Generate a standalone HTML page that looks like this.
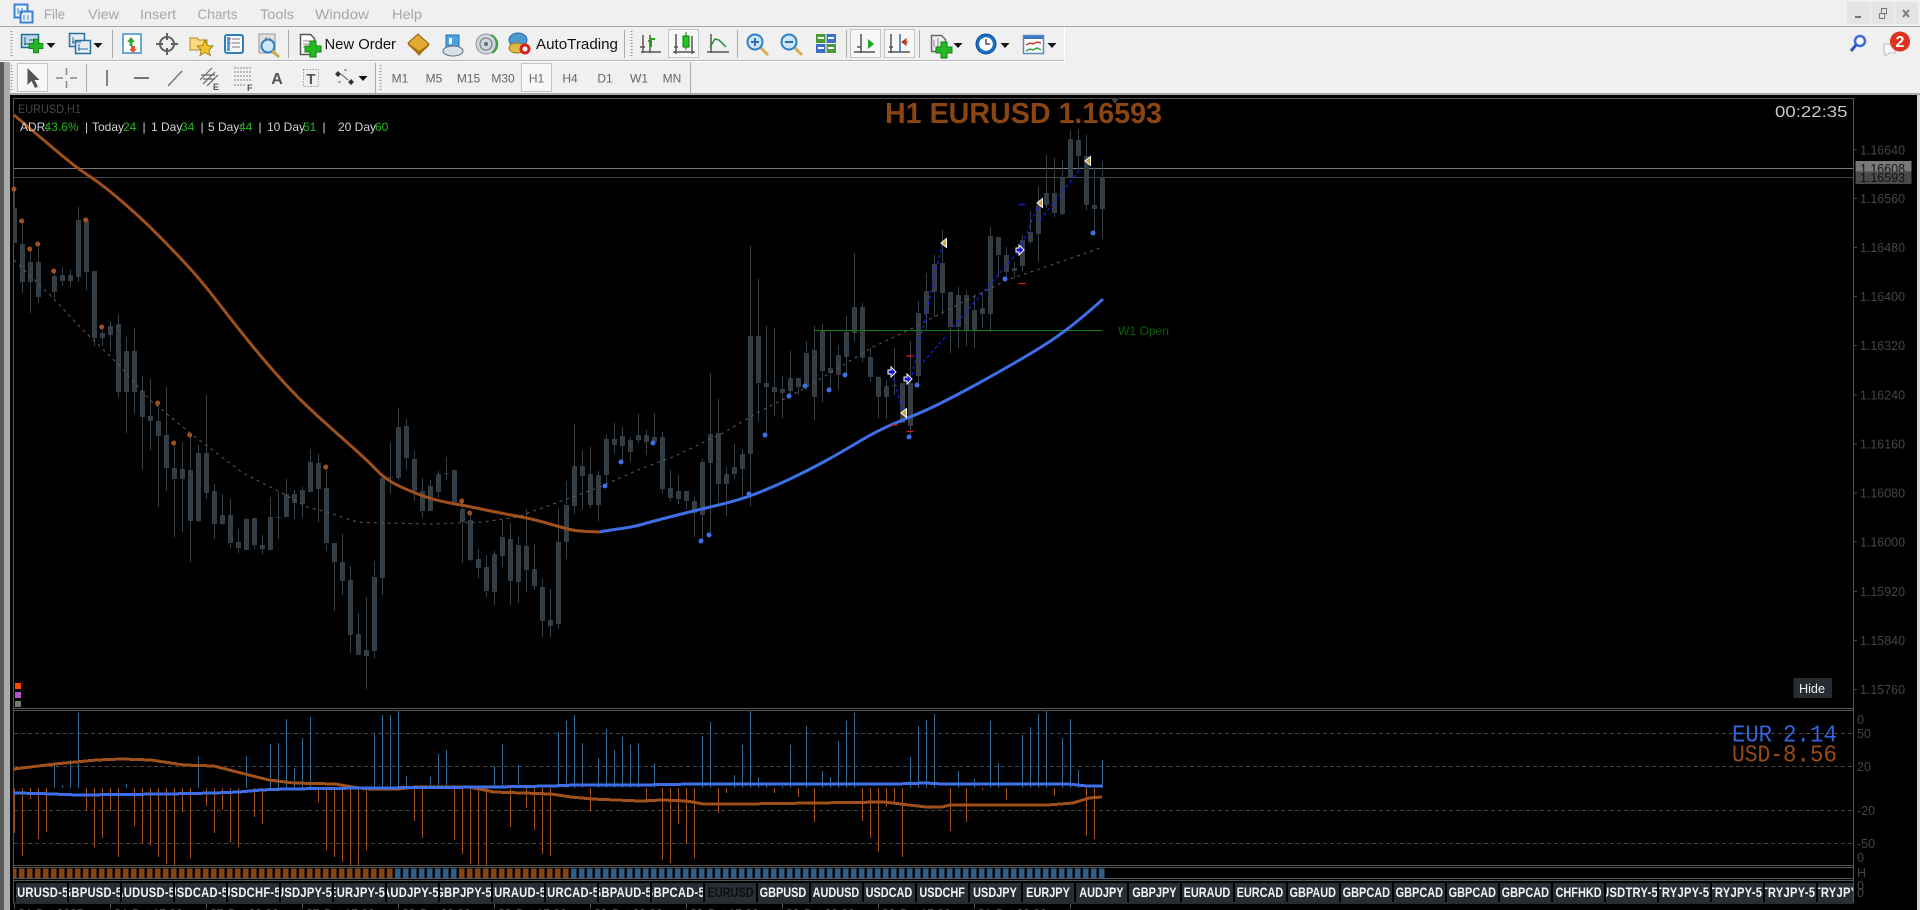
<!DOCTYPE html>
<html lang="en"><head><meta charset="utf-8"><title>EURUSD,H1</title>
<style>
html,body{margin:0;padding:0;width:1920px;height:910px;overflow:hidden;background:#f0f0f0;font-family:"Liberation Sans",sans-serif}
svg.main{position:absolute;left:0;top:0}
.b{position:absolute;top:883px;width:51.5px;height:19px;background:#282e33;overflow:hidden;display:flex;justify-content:center;color:#f4f4f4;font:bold 14px/19px "Liberation Sans",sans-serif;white-space:nowrap}
.b span{display:block;flex:none;transform:scaleX(.78)}
.b.l span{transform:translateX(-2px) scaleX(.8);letter-spacing:.3px}
.b.d{color:#0c0e10}
.clip{position:absolute;left:0;top:0;width:1853px;height:910px;overflow:hidden}
</style></head><body>
<svg class="main" width="1920" height="910" viewBox="0 0 1920 910" xmlns="http://www.w3.org/2000/svg" font-family="'Liberation Sans',sans-serif">
<defs>
<g id="plus"><path d="M-3-8h6v5h5v6h-5v5h-6v-5h-5v-6h5z" fill="#24b824" stroke="#0f7f0f"/></g>
<g id="drop"><path d="M-4.500 0h9l-4.500 5z" fill="#111"/></g>
<g id="axis" fill="none" stroke="#555" stroke-width="1.500"><path d="M-8-9V9M-1-9V9M-10 8H10M-11 3h5M-3-3h4"/></g>
<pattern id="po" patternUnits="userSpaceOnUse" x="11" y="0" width="8" height="10"><rect width="5.500" height="10" fill="#8b4513"/></pattern>
<pattern id="pb" patternUnits="userSpaceOnUse" x="11" y="0" width="8" height="10"><rect width="5.500" height="10" fill="#2c5f8c"/></pattern>
</defs>

<!-- chrome -->
<rect width="1920" height="910" fill="#f0f0f0"/>
<rect x="0" y="26" width="1920" height="1" fill="#a4a4a4"/>
<rect x="0" y="60" width="1064" height="1" fill="#b4b4b4"/><rect x="0" y="61" width="1065" height="1" fill="#fff"/>
<rect x="1064" y="27" width="1" height="34" fill="#fff"/>
<rect x="0" y="93" width="1920" height="2" fill="#a8a8a8"/>

<!-- app icon -->
<g><rect x="14.500" y="4.500" width="13" height="13" fill="#e8f2fc" stroke="#3b82d6" stroke-width="2"/><rect x="20.500" y="11.500" width="12" height="11" fill="#e8f2fc" stroke="#3b82d6" stroke-width="2"/><path d="M18 8v6M22 8v6M24 15v5M28 15v5" stroke="#3b82d6"/></g>
<!-- menu -->
<g font-size="14" fill="#a6a6a6">
<text x="44" y="19" textLength="21" lengthAdjust="spacingAndGlyphs">File</text>
<text x="88" y="19" textLength="31" lengthAdjust="spacingAndGlyphs">View</text>
<text x="140" y="19" textLength="36" lengthAdjust="spacingAndGlyphs">Insert</text>
<text x="197.500" y="19" textLength="40" lengthAdjust="spacingAndGlyphs">Charts</text>
<text x="260" y="19" textLength="34" lengthAdjust="spacingAndGlyphs">Tools</text>
<text x="315" y="19" textLength="54" lengthAdjust="spacingAndGlyphs">Window</text>
<text x="392" y="19" textLength="30" lengthAdjust="spacingAndGlyphs">Help</text>
</g>
<!-- window buttons -->
<rect x="1847" y="2" width="23" height="22" fill="#e4e4e4"/><rect x="1871" y="2" width="23" height="22" fill="#e4e4e4"/><rect x="1895" y="2" width="23" height="22" fill="#e4e4e4"/>
<path d="M1855 17h6" stroke="#777" stroke-width="2"/>
<path d="M1880.500 13.500h6v-5h-5v5M1879.500 13.500h5v5h-5z" fill="none" stroke="#777"/>
<path d="M1903 10l6 7M1909 10l-6 7" stroke="#777" stroke-width="1.800"/>
<!-- grips + seps -->
<path d="M11.500 31v26M631.500 31v26M11.500 65v26M380.500 65v26" stroke="#999" stroke-width="2" stroke-dasharray="1 2"/>
<path d="M112.500 30v28M288.500 30v28M624.500 30v28M737.500 30v28M846.500 30v28M919.500 30v28M86.500 64v28M375.500 63v30M690.500 62v31" stroke="#aaa"/>
<!-- selected boxes -->
<g fill="#f7f7f7" stroke="#c4c4c4"><rect x="668.500" y="29.500" width="30" height="28"/><rect x="850.500" y="29.500" width="30" height="28"/><rect x="884.500" y="29.500" width="30" height="28"/><rect x="17.500" y="63.500" width="30" height="28"/><rect x="521.500" y="63.500" width="30" height="28"/></g>

<!-- toolbar1 icons -->
<g><rect x="21.500" y="34.500" width="17" height="13" fill="#bcd8e8" stroke="#1e6e8e" stroke-width="1.500"/><path d="M25 37v8M24 44h12M29 40h6" stroke="#1e5e7e"/><use href="#plus" transform="translate(36 46) scale(.85)"/></g>
<use href="#drop" x="51" y="43"/>
<g fill="#e4ecf4" stroke="#2a6f9e" stroke-width="1.500"><rect x="69.500" y="33.500" width="15" height="13"/><rect x="75.500" y="40.500" width="15" height="13"/></g><path d="M73 37v7M72 42h9M79 44v7M78 49h10" stroke="#2a6f9e"/>
<use href="#drop" x="98" y="43"/>
<g><rect x="123" y="34" width="18" height="19" fill="#fff" stroke="#6aa8dc" stroke-width="2"/><path d="M127 42l4-5 4 5h-2.500v4h-3v-4z" fill="#2eaa2e"/><path d="M131 46h4v3h2l-4 4-4-4h2z" fill="#e0552a"/></g>
<g fill="none" stroke="#606060"><circle cx="167" cy="44" r="7" stroke-width="2"/><path d="M167 33v7M167 48v7M156 44h7M171 44h7" stroke-width="2"/></g>
<g><path d="M190 38h7l2 2h8v10h-17z" fill="#f8dc80" stroke="#b08a20"/><path d="M205 40l2.500 5.500 5.500.5-4 4 1.300 5.500-5.300-3-5 3 1.200-5.500-4-4 5.500-.5z" fill="#f2c428" stroke="#a88418"/></g>
<g><rect x="225" y="35" width="18" height="18" rx="2" fill="#f8f8f8" stroke="#2a7fc0" stroke-width="2"/><path d="M227 37h3v14h-3z" fill="#4aa0e0"/><path d="M232 39h8M232 43h8M232 47h8" stroke="#777"/><path d="M229 39h2M229 43h2" stroke="#d03030"/></g>
<g><rect x="259" y="34" width="16" height="19" fill="#e0e0e0" stroke="#999"/><circle cx="268" cy="46" r="6.500" fill="#cfe6f8" stroke="#2a80c8" stroke-width="2"/><path d="M272 51l7 6" stroke="#c8a848" stroke-width="3"/><path d="M266 41v-4M270 41v-3" stroke="#666"/></g>
<g><path d="M300.500 34.500h10l4 4v16h-14z" fill="#fff" stroke="#555" stroke-width="1.500"/><path d="M303 41h8M303 44h8M303 47h5" stroke="#888"/><use href="#plus" transform="translate(313 49)"/></g>
<text x="324.500" y="49" font-size="15" fill="#111" textLength="71.500" lengthAdjust="spacingAndGlyphs">New Order</text>
<g><path d="M408 43l10-9 11 10-10 11z" fill="#e0aa30" stroke="#8a5a10"/><path d="M408 43l11 8 10-7v2l-10 9-11-10z" fill="#a87014"/></g>
<g><rect x="446" y="35" width="13" height="13" fill="#4aa0e0" stroke="#1e6eb0"/><path d="M449 38h3v6h-3z" fill="#fff"/><ellipse cx="453" cy="51" rx="10" ry="5" fill="#d8e0e8" stroke="#5a6a7a"/></g>
<g fill="none"><circle cx="486" cy="44" r="10" fill="#cfd6da" stroke="#8a9498"/><circle cx="486" cy="44" r="6" stroke="#6a7478"/><circle cx="486" cy="44" r="2" fill="#507880"/><path d="M491 35a10 10 0 0 1 1 18" stroke="#3aa040" stroke-width="2"/></g>
<g><ellipse cx="518" cy="40" rx="9" ry="7" fill="#4a9ad0" stroke="#2a6a98"/><ellipse cx="517" cy="48" rx="8" ry="5" fill="#e2b648" stroke="#a07c20"/><circle cx="525" cy="49" r="5.500" fill="#d82020"/><circle cx="525" cy="49" r="2.500" fill="#fff"/></g>
<text x="536" y="49" font-size="15" fill="#111" textLength="82" lengthAdjust="spacingAndGlyphs">AutoTrading</text>

<!-- chart type icons -->
<use href="#axis" x="651" y="44"/><path d="M651 47v-8h4" fill="none" stroke="#1aa01a" stroke-width="2"/>
<g transform="translate(684 44)"><path d="M-8-10V10M-11 8H11M-10 3h4M8-8V10" fill="none" stroke="#555" stroke-width="1.500"/><path d="M2-12V6" stroke="#0a7a0a"/><rect x="-1" y="-8" width="6" height="11" fill="#1ec81e" stroke="#0a7a0a"/></g>
<g transform="translate(718 44)"><path d="M-7-10V9M-11 8H11" fill="none" stroke="#555" stroke-width="1.500"/><path d="M-8 3l5-8 4 1 7 7" fill="none" stroke="#2a8a3a" stroke-width="1.500"/></g>
<g fill="#cfe6f8" stroke="#2a7fc8" stroke-width="2"><circle cx="755" cy="42" r="7.500"/><circle cx="789" cy="42" r="7.500"/></g>
<path d="M751 42h8M755 38v8M785 42h8" stroke="#2a70b8" stroke-width="2"/>
<path d="M761 48l7 7M795 48l7 7" stroke="#d6b050" stroke-width="3"/>
<g><rect x="816" y="34" width="20" height="19" fill="#fff"/><rect x="816" y="34" width="9.500" height="9" fill="#4a9a3a"/><rect x="826.500" y="34" width="9.500" height="9" fill="#3a70c8"/><rect x="816" y="44" width="9.500" height="9" fill="#3a70c8"/><rect x="826.500" y="44" width="9.500" height="9" fill="#4a9a3a"/><path d="M818 38h6M828 38h6M818 48h6M828 48h6" stroke="#fff" stroke-width="2"/></g>
<g transform="translate(865 44)"><path d="M-4-10V9M-11 8H10M-8 3h4" fill="none" stroke="#555" stroke-width="1.500"/><path d="M3-5l6 5-6 5z" fill="#1ea81e"/></g>
<g transform="translate(899 44)"><path d="M-8-10V9M-11 8H11M-10 3h4" fill="none" stroke="#555" stroke-width="1.500"/><path d="M1-10V9" stroke="#2a70b8" stroke-width="1.500"/><path d="M9-2l-5 0M7-5l-4 3 4 3z" fill="#d84a20" stroke="#c02a10"/></g>
<!-- templates/periods/indicators -->
<g><path d="M931.500 35.500h10l4 4v12h-14z" fill="#eee" stroke="#666" stroke-width="1.500"/><path d="M934 40v7M938 38v9" stroke="#888"/><use href="#plus" transform="translate(944 50)"/></g><use href="#drop" x="958" y="43"/>
<g><circle cx="986" cy="44" r="10" fill="#1a6ec8" stroke="#104a90"/><circle cx="986" cy="44" r="6.800" fill="#fff"/><path d="M986 39v5h4" fill="none" stroke="#333" stroke-width="1.300"/></g><use href="#drop" x="1005" y="43"/>
<g><rect x="1023.500" y="35.500" width="20" height="18" fill="#fff" stroke="#5a8ac0" stroke-width="1.500"/><rect x="1024" y="36" width="19" height="3" fill="#3a78c8"/><path d="M1026 45l4-2 3 1 4-2 4 1" fill="none" stroke="#c03a20" stroke-width="1.500"/><path d="M1026 51l4-2 3 1 4-2 4 2" fill="none" stroke="#2a9a3a" stroke-width="1.500"/></g><use href="#drop" x="1052" y="43"/>

<!-- toolbar2 icons -->
<path d="M27.500 68v17l4-4 3.500 7 3-1.500-3.500-6.500h5z" fill="#555"/>
<path d="M66.500 68v7M66.500 81v7M56 78h7M70 78h7" stroke="#888" stroke-width="1.500"/>
<path d="M107 70v16" stroke="#777" stroke-width="1.800"/>
<path d="M134 78h15" stroke="#666" stroke-width="1.800"/>
<path d="M168 86l14-15" stroke="#777" stroke-width="1.500"/>
<path d="M200 80l12-12M203 84l12-12M207 86l11-11M201 75h14M203 79h12" stroke="#666" stroke-width="1.200"/>
<text x="213" y="90" font-size="9" font-weight="bold" fill="#555">E</text>
<path d="M234 68h17M234 72h17M234 76h17M234 80h17M234 85h12" stroke="#888" stroke-dasharray="2 1"/>
<text x="247" y="91" font-size="9" font-weight="bold" fill="#555">F</text>
<text x="277" y="84" font-size="16" font-weight="bold" fill="#555" text-anchor="middle">A</text>
<rect x="303.500" y="69.500" width="15" height="17" fill="none" stroke="#777" stroke-dasharray="1 2"/>
<text x="311" y="84" font-size="15" font-weight="bold" fill="#555" text-anchor="middle">T</text>
<path d="M338 71l3 3-3 3-3-3zM351 79l3 3-3 3-3-3z" fill="#333"/><path d="M341 74l7 6" stroke="#555"/><path d="M347 70h-3M338 82h3" stroke="#3a7a3a"/>
<use href="#drop" x="363" y="76"/>
<g font-size="12" fill="#666" text-anchor="middle">
<text x="400" y="82.500">M1</text><text x="434" y="82.500">M5</text><text x="468.500" y="82.500">M15</text><text x="503" y="82.500">M30</text>
<text x="536.500" y="82.500">H1</text><text x="570" y="82.500">H4</text><text x="605" y="82.500">D1</text><text x="639" y="82.500">W1</text><text x="672" y="82.500">MN</text>
</g>
<!-- search + chat -->
<circle cx="1860" cy="41" r="5" fill="#fff" stroke="#3a6ad8" stroke-width="2.500"/><path d="M1856 45l-5 6" stroke="#2a5ac0" stroke-width="3"/>
<path d="M1884 44h11v9h-6l-4 3v-3h-1z" fill="#f8f8f8" stroke="#bbb"/>
<circle cx="1900" cy="41.500" r="10" fill="#e0301e"/>
<text x="1900" y="47" font-size="16" font-weight="bold" fill="#fff" text-anchor="middle">2</text>

<!-- left edge -->
<rect x="0" y="62" width="4" height="848" fill="#5a5a5a"/><rect x="4" y="62" width="6" height="848" fill="#ababab"/>
<!-- chart bg -->
<rect x="10" y="95" width="1907" height="815" fill="#000"/>
<rect x="1917" y="95" width="3" height="815" fill="#d8d8d8"/>

<!-- frames -->
<g stroke="#555" fill="none">
<path d="M13.500 98.500H1853.500V903M13.500 98.500V903"/>
<path d="M13 708.500H1853M13 710.500H1853M13 865.500H1853M13 867.500H1853M13 878.500H1853M13 880.500H1853M13 903H1853" />
</g>
<!-- levels -->
<path d="M14 168.500H1853" stroke="#7c7c7c"/><path d="M14 177.500H1853" stroke="#444"/>
<path d="M1111 98l4 6 4-6z" fill="#444"/>
<path d="M1853 150h4M1853 198.500h4M1853 247.500h4M1853 296.500h4M1853 345.500h4M1853 395h4M1853 444h4M1853 493h4M1853 542h4M1853 591.500h4M1853 640.500h4M1853 689.500h4" stroke="#444"/>

<!-- wicks -->
<path stroke="#353e45" fill="none" d="M14.500 189V243M22.500 221V293M30.500 249V313M38.500 244V303M54.500 271V298M62.500 267V286M70.500 270V287M78.500 207V282M86.500 220V290M94.500 271V346M102.500 327V346M110.500 321V352M118.500 314V398M126.500 337V433M134.500 328V414M142.500 376V470M150.500 379V450M158.500 403V507M166.500 387V491M174.500 443V537M182.500 442V532M190.500 435V562M198.500 445V522M206.500 395V499M214.500 484V539M222.500 494V525M230.500 499V548M238.500 529V553M246.500 518V550M254.500 518V549M262.500 535V554M270.500 497V550M278.500 492V539M286.500 479V517M294.500 490V519M302.500 487V518M310.500 449V492M318.500 454V522M326.500 467V551M334.500 543V611M342.500 534V595M350.500 566V653M358.500 613V655M366.500 597V689M374.500 561V658M382.500 477V595M390.500 442V494M398.500 408V480M406.500 419V470M414.500 451V501M422.500 478V518M430.500 480V511M438.500 471V498M446.500 457V480M454.500 469V503M462.500 501V563M470.500 513V561M478.500 549V578M486.500 555V597M494.500 551V605M502.500 520V567M510.500 523V605M518.500 537V603M526.500 509V592M534.500 544V590M542.500 579V637M550.500 589V637M558.500 509V629M566.500 481V559M574.500 424V514M582.500 450V510M590.500 447V508M598.500 471V521M606.500 435V485M614.500 423V454M622.500 427V460M630.500 437V462M638.500 414V443M646.500 430V455M654.500 413V443M662.500 432V493M670.500 470V501M678.500 475V504M686.500 491V509M694.500 497V537M702.500 459V540M710.500 373V533M718.500 399V503M726.500 467V516M734.500 444V479M742.500 449V497M750.500 246V506M758.500 279V422M766.500 326V433M774.500 328V416M782.500 376V418M790.500 351V395M798.500 378V395M806.500 341V390M814.500 326V420M822.500 324V402M830.500 331V390M838.500 345V390M846.500 316V375M854.500 253V342M862.500 303V362M870.500 348V382M878.500 376V418M886.500 380V419M894.500 348V395M902.500 383V423M910.500 341V435M918.500 301V383M926.500 273V330M934.500 255V317M942.500 230V315M950.500 292V353M958.500 287V348M966.500 290V346M974.500 294V348M982.500 292V328M990.500 227V332M998.500 237V277M1006.500 247V279M1014.500 262V278M1022.500 235V271M1030.500 211V244M1038.500 186V262M1046.500 155V208M1054.500 158V217M1062.500 160V215M1070.500 130V177M1078.500 129V170M1086.500 135V210M1094.500 168V233M1102.500 161V239"/>
<!-- bodies -->
<path fill="#343d44" d="M13 208h4v35h-4zM20 244h5v38h-5zM28 262h5v20h-5zM36 262h5v35h-5zM52 276h5v16h-5zM60 275h5v6h-5zM68 275h5v6h-5zM76 220h5v57h-5zM84 220h5v52h-5zM92 271h5v67h-5zM100 333h5v5h-5zM108 326h5v9h-5zM116 324h5v68h-5zM124 351h5v41h-5zM132 351h5v41h-5zM140 391h5v26h-5zM148 416h5v5h-5zM156 421h5v15h-5zM164 435h5v33h-5zM172 468h5v11h-5zM180 469h5v10h-5zM188 470h5v51h-5zM196 453h5v68h-5zM204 453h5v40h-5zM212 491h5v33h-5zM220 515h5v9h-5zM228 515h5v28h-5zM236 542h5v6h-5zM244 519h5v31h-5zM252 518h5v27h-5zM260 545h5v4h-5zM268 517h5v33h-5zM276 517h5v1h-5zM284 494h5v23h-5zM292 494h5v9h-5zM300 490h5v14h-5zM308 462h5v30h-5zM316 463h5v26h-5zM324 488h5v55h-5zM332 543h5v19h-5zM340 562h5v19h-5zM348 580h5v55h-5zM356 634h5v21h-5zM364 650h5v6h-5zM372 577h5v74h-5zM380 478h5v100h-5zM388 477h5v1h-5zM396 427h5v51h-5zM404 426h5v32h-5zM412 459h5v32h-5zM420 491h5v20h-5zM428 486h5v25h-5zM436 474h5v18h-5zM444 473h5v1h-5zM452 470h5v32h-5zM460 509h5v13h-5zM468 520h5v40h-5zM476 559h5v9h-5zM484 567h5v24h-5zM492 554h5v38h-5zM500 537h5v19h-5zM508 539h5v42h-5zM516 545h5v37h-5zM524 546h5v24h-5zM532 569h5v17h-5zM540 587h5v34h-5zM548 620h5v6h-5zM556 542h5v82h-5zM564 505h5v37h-5zM572 466h5v40h-5zM580 466h5v10h-5zM588 474h5v31h-5zM596 475h5v30h-5zM604 439h5v36h-5zM612 439h5v6h-5zM620 436h5v10h-5zM628 440h5v12h-5zM636 435h5v5h-5zM644 435h5v7h-5zM652 437h5v5h-5zM660 437h5v52h-5zM668 488h5v10h-5zM676 491h5v8h-5zM684 491h5v10h-5zM692 501h5v12h-5zM700 462h5v53h-5zM708 434h5v29h-5zM716 433h5v51h-5zM724 474h5v10h-5zM732 467h5v7h-5zM740 454h5v15h-5zM748 336h5v118h-5zM756 336h5v47h-5zM764 383h5v4h-5zM772 387h5v5h-5zM780 389h5v4h-5zM788 378h5v13h-5zM796 378h5v9h-5zM804 353h5v33h-5zM812 350h5v47h-5zM820 331h5v40h-5zM828 368h5v5h-5zM836 355h5v20h-5zM844 332h5v25h-5zM852 307h5v26h-5zM860 307h5v51h-5zM868 357h5v20h-5zM876 377h5v20h-5zM884 386h5v11h-5zM892 385h5v1h-5zM900 383h5v40h-5zM908 383h5v43h-5zM916 313h5v63h-5zM924 291h5v23h-5zM932 264h5v28h-5zM940 263h5v30h-5zM948 292h5v35h-5zM956 295h5v32h-5zM964 295h5v35h-5zM972 310h5v20h-5zM980 308h5v6h-5zM988 236h5v78h-5zM996 237h5v18h-5zM1004 255h5v17h-5zM1012 268h5v3h-5zM1020 240h5v26h-5zM1028 232h5v10h-5zM1036 205h5v29h-5zM1044 193h5v12h-5zM1052 193h5v20h-5zM1060 178h5v36h-5zM1068 139h5v38h-5zM1076 140h5v16h-5zM1084 156h5v49h-5zM1092 205h5v4h-5zM1100 177h5v32h-5z"/>
<!-- dotted MA -->
<polyline fill="none" stroke="#5c5c5c" stroke-dasharray="3 4" points="14,260 53,298 80,327 117,363 150,400 190,433 243,473 280,492 307,507 330,513 357,522 380,523 433,524 483,522 517,517 567,499 600,487 640,469 673,457 723,433 757,413 807,387 840,367 873,347 913,328 957,305 1007,280 1057,263 1100,248"/>
<!-- W1 -->
<path d="M814 330.500H1102" stroke="#0a7d0a"/>
<text x="1118" y="335" font-size="12" fill="#066006" textLength="51" lengthAdjust="spacingAndGlyphs">W1 Open</text>
<!-- MA lines -->
<path fill="none" stroke="#a0501c" stroke-width="3" stroke-linejoin="round" d="M14 115L33.500 131.500Q53 148 65 158Q77 168 87 174.500Q97 181 107 189Q117 197 130 208.500Q143 220 156.500 233.500Q170 247 185 263Q200 279 216.500 300.500Q233 322 250 343Q267 364 283.500 382Q300 400 316.500 415Q333 430 350 445Q367 460 375 468.500Q383 477 391.500 482Q400 487 416.500 493.500Q433 500 450 503Q467 506 483.500 509.500Q500 513 516.500 516Q533 519 550 524Q567 529 572.500 530Q578 531 588.500 531.500L599 532"/>
<path fill="none" stroke="#3f6fe8" stroke-width="3" stroke-linejoin="round" d="M599 532L608 530.500Q617 529 625 528Q633 527 641.500 524.500Q650 522 671.500 516.500Q693 511 716.500 505.500Q740 500 756.500 493.500Q773 487 790 479Q807 471 823.500 462Q840 453 860 441Q880 429 901.500 420.500Q923 412 940 403.500Q957 395 973.500 386Q990 377 1013.500 363.500Q1037 350 1052 340Q1067 330 1083.500 316Q1100 302 1103 299"/>
<!-- dashes -->
<path d="M892 372L903 413M912 375L942 245M923 362L947 335M953 327L1020 250L1038 205M1040 220L1082 167" fill="none" stroke="#1a1af0" stroke-width="1.300" stroke-dasharray="3 3"/>
<path d="M906.500 356h7M890.500 425h7M906.500 431.500h7M1018.500 283.500h7" stroke="#d81e1e" stroke-width="1.300"/><path d="M1018.500 204.500h7" stroke="#1a1af0" stroke-width="1.300"/>
<!-- dots -->
<g fill="#a0501c"><circle cx="14" cy="189" r="2.500"/><circle cx="21.700" cy="221" r="2.500"/><circle cx="29.700" cy="249" r="2.500"/><circle cx="37.700" cy="244" r="2.500"/><circle cx="53.700" cy="271" r="2.500"/><circle cx="85.700" cy="220" r="2.500"/><circle cx="101.700" cy="327" r="2.500"/><circle cx="157.700" cy="403" r="2.500"/><circle cx="173.700" cy="443" r="2.500"/><circle cx="189.700" cy="435" r="2.500"/><circle cx="325.700" cy="467" r="2.500"/><circle cx="461.700" cy="501" r="2.500"/><circle cx="469.700" cy="513" r="2.500"/></g>
<g fill="#3f6fe8"><circle cx="605" cy="486" r="2.500"/><circle cx="621" cy="462" r="2.500"/><circle cx="653" cy="443" r="2.500"/><circle cx="701" cy="541" r="2.500"/><circle cx="709" cy="535" r="2.500"/><circle cx="749" cy="494" r="2.500"/><circle cx="765" cy="435" r="2.500"/><circle cx="789" cy="396" r="2.500"/><circle cx="805" cy="386" r="2.500"/><circle cx="829" cy="390" r="2.500"/><circle cx="845" cy="375" r="2.500"/><circle cx="909" cy="437" r="2.500"/><circle cx="917" cy="385" r="2.500"/><circle cx="1005" cy="279" r="2.500"/><circle cx="1093" cy="233" r="2.500"/></g>
<!-- signals -->
<g fill="#1414e0" stroke="#fff"><path transform="translate(892 372)" d="M-4-2h3v-3l5 5-5 5v-3h-3z"/><path transform="translate(908 379)" d="M-4-2h3v-3l5 5-5 5v-3h-3z"/><path transform="translate(1020 250)" d="M-4-2h3v-3l5 5-5 5v-3h-3z"/></g>
<g fill="#d89a28" stroke="#fff"><path transform="translate(904 413)" d="M-3 0L2.500-4.500V4.500z"/><path transform="translate(944 243)" d="M-3 0L2.500-4.500V4.500z"/><path transform="translate(1040 203)" d="M-3 0L2.500-4.500V4.500z"/><path transform="translate(1088 161)" d="M-3 0L2.500-4.500V4.500z"/></g>

<!-- chart text -->
<text x="18" y="113" font-size="12" fill="#474747" textLength="63" lengthAdjust="spacingAndGlyphs">EURUSD,H1</text>
<g font-size="12" fill="#d0d4d8">
<text x="20" y="131">ADR:</text><text x="85" y="131">|</text><text x="92" y="131">Today</text><text x="142.500" y="131">|</text><text x="151" y="131">1 Day</text><text x="200.500" y="131">|</text><text x="208" y="131">5 Day:</text><text x="258.500" y="131">|</text><text x="267" y="131">10 Day</text><text x="322.500" y="131">|</text><text x="338" y="131">20 Day</text>
</g>
<g font-size="12" fill="#1fb81f"><text x="44.500" y="131">43.6%</text><text x="123" y="131">24</text><text x="181" y="131">34</text><text x="239" y="131">44</text><text x="303" y="131">51</text><text x="375" y="131">60</text></g>
<text x="885" y="123" font-size="29" font-weight="bold" fill="#8b4513" textLength="277" lengthAdjust="spacingAndGlyphs">H1 EURUSD 1.16593</text>
<text x="1775" y="117" font-size="16" fill="#c8c8c8" textLength="72.500" lengthAdjust="spacingAndGlyphs">00:22:35</text>
<!-- axis labels -->
<g font-size="12.500" fill="#454545">
<text x="1860" y="154.500" textLength="45" lengthAdjust="spacingAndGlyphs">1.16640</text>
<text x="1860" y="203" textLength="45" lengthAdjust="spacingAndGlyphs">1.16560</text>
<text x="1860" y="252" textLength="45" lengthAdjust="spacingAndGlyphs">1.16480</text>
<text x="1860" y="301" textLength="45" lengthAdjust="spacingAndGlyphs">1.16400</text>
<text x="1860" y="350" textLength="45" lengthAdjust="spacingAndGlyphs">1.16320</text>
<text x="1860" y="399.500" textLength="45" lengthAdjust="spacingAndGlyphs">1.16240</text>
<text x="1860" y="448.500" textLength="45" lengthAdjust="spacingAndGlyphs">1.16160</text>
<text x="1860" y="497.500" textLength="45" lengthAdjust="spacingAndGlyphs">1.16080</text>
<text x="1860" y="546.500" textLength="45" lengthAdjust="spacingAndGlyphs">1.16000</text>
<text x="1860" y="596" textLength="45" lengthAdjust="spacingAndGlyphs">1.15920</text>
<text x="1860" y="645" textLength="45" lengthAdjust="spacingAndGlyphs">1.15840</text>
<text x="1860" y="694" textLength="45" lengthAdjust="spacingAndGlyphs">1.15760</text>
</g>
<rect x="1855.500" y="161" width="56" height="11" fill="#787878"/>
<text x="1860" y="173" font-size="12.500" fill="#161616" textLength="45" lengthAdjust="spacingAndGlyphs">1.16608</text>
<rect x="1855.500" y="171.500" width="56" height="12.500" fill="#4a4a4a"/>
<text x="1860" y="182" font-size="12.500" fill="#111" textLength="45" lengthAdjust="spacingAndGlyphs">1.16593</text>
<!-- Hide -->
<rect x="1793.500" y="678" width="38.500" height="20" fill="#262c31"/>
<text x="1799" y="693" font-size="13" fill="#f0f0f0" textLength="26" lengthAdjust="spacingAndGlyphs">Hide</text>
<!-- legend squares -->
<rect x="15" y="683" width="6" height="6" fill="#ff4500"/><rect x="15" y="692" width="6" height="6" fill="#b455c8"/><rect x="15" y="701" width="6" height="6" fill="#777"/>

<!-- indicator -->
<path d="M14 733.500H1853M14 766.500H1853M14 810.500H1853M14 843.500H1853" stroke="#444" stroke-dasharray="4 3"/>
<path stroke="#a0501c" fill="none" d="M14.500 788V833M22.500 788V856M30.500 788V799M38.500 788V839M46.500 788V832M86.500 788V810M94.500 788V847M102.500 788V838M110.500 788V811M118.500 788V857M134.500 788V826M142.500 788V843M150.500 788V846M158.500 788V857M166.500 788V864M174.500 788V865M182.500 788V812M190.500 788V858M206.500 788V806M214.500 788V833M222.500 788V810M230.500 788V842M238.500 788V847M254.500 788V817M262.500 788V824M318.500 788V802M326.500 788V850M334.500 788V857M342.500 788V862M350.500 788V865M358.500 788V865M366.500 788V850M414.500 788V821M422.500 788V838M454.500 788V840M462.500 788V854M470.500 788V864M478.500 788V865M486.500 788V865M510.500 788V827M526.500 788V808M534.500 788V830M542.500 788V854M550.500 788V856M590.500 788V811M646.500 788V803M662.500 788V860M670.500 788V863M678.500 788V824M686.500 788V843M694.500 788V858M718.500 788V813M726.500 788V793M774.500 788V793M798.500 788V797M814.500 788V822M862.500 788V821M870.500 788V838M878.500 788V852M886.500 788V807M894.500 788V803M902.500 788V857M950.500 788V831M966.500 788V822M982.500 788V790M1006.500 788V800M1054.500 788V796M1086.500 788V836M1094.500 788V839"/>
<path stroke="#2f6a96" fill="none" d="M54.500 788V765M62.500 788V785M70.500 788V760M78.500 788V713M126.500 788V784M198.500 788V756M246.500 788V756M270.500 788V744M278.500 788V743M286.500 788V719M294.500 788V768M302.500 788V738M310.500 788V717M374.500 788V734M382.500 788V715M390.500 788V715M398.500 788V711M406.500 788V776M430.500 788V777M438.500 788V754M446.500 788V750M494.500 788V766M502.500 788V744M518.500 788V765M558.500 788V732M566.500 788V721M574.500 788V715M582.500 788V743M598.500 788V758M606.500 788V729M614.500 788V750M622.500 788V737M630.500 788V745M638.500 788V743M654.500 788V763M702.500 788V736M710.500 788V722M734.500 788V775M742.500 788V745M750.500 788V711M758.500 788V777M766.500 788V783M782.500 788V786M790.500 788V745M806.500 788V726M822.500 788V771M830.500 788V777M838.500 788V741M846.500 788V721M854.500 788V713M910.500 788V757M918.500 788V726M926.500 788V720M934.500 788V714M958.500 788V771M974.500 788V779M990.500 788V721M998.500 788V763M1022.500 788V735M1030.500 788V727M1038.500 788V714M1046.500 788V711M1062.500 788V738M1070.500 788V719M1078.500 788V770M1102.500 788V760"/>
<polyline fill="none" stroke="#a0501c" stroke-width="3" shape-rendering="crispEdges" points="14,769 55,764 96,760 122,759 151,760 184,765 214,766 245,774 269,780 294,783 335,784 359,788 371,789 398,789 416,787 469,787 494,792 551,794 571,797 592,799 640,801 662,800 687,801 703,804 742,804 885,802 909,805 926,807 942,807 950,805 1048,805 1073,803 1089,798 1102,797"/>
<polyline fill="none" stroke="#3f6fe8" stroke-width="3" shape-rendering="crispEdges" points="14,793 39,793.500 78,795 167,794 214,793 239,792 261,790 286,789 367,788 494,787 551,786 575,785 640,785 695,784 895,784 926,783 942,784 1068,784 1087,786 1102,786"/>
<g font-size="12.500" fill="#454545"><text x="1857" y="724">0</text><text x="1857" y="738">50</text><text x="1857" y="771">20</text><text x="1857" y="815">-20</text><text x="1857" y="848">-50</text><text x="1857" y="862">0</text><text x="1857" y="877">H</text><text x="1857" y="890">0</text><text x="1857" y="897">0</text></g>
<g font-family="'Liberation Mono',monospace" font-size="24"><text x="1732" y="741.500" fill="#3564e0" textLength="40" lengthAdjust="spacingAndGlyphs">EUR</text><text x="1783" y="741.500" fill="#3564e0" textLength="54" lengthAdjust="spacingAndGlyphs">2.14</text><text x="1732" y="761.500" fill="#9a4c16" textLength="51" lengthAdjust="spacingAndGlyphs">USD-</text><text x="1783" y="761.500" fill="#9a4c16" textLength="54" lengthAdjust="spacingAndGlyphs">8.56</text></g>
<!-- strip -->
<rect x="14" y="868.500" width="379" height="9.500" fill="url(#po)"/>
<rect x="395" y="868.500" width="62" height="9.500" fill="url(#pb)"/>
<rect x="459" y="868.500" width="110" height="9.500" fill="url(#po)"/>
<rect x="571" y="868.500" width="534" height="9.500" fill="url(#pb)"/>
<!-- time ticks -->
<path d="M14.500 904v5M110.500 904v5M206.500 904v5M302.500 904v5M398.500 904v5M494.500 904v5M590.500 904v5M686.500 904v5M782.500 904v5M878.500 904v5M974.500 904v5M1070.500 904v5" stroke="#555"/>
<g font-size="12" fill="#555"><text x="18" y="917.500">24 Oct 2025</text><text x="114" y="917.500">24 Oct 17:00</text><text x="210" y="917.500">27 Oct 09:00</text><text x="306" y="917.500">27 Oct 17:00</text><text x="402" y="917.500">28 Oct 09:00</text><text x="498" y="917.500">28 Oct 17:00</text><text x="594" y="917.500">29 Oct 09:00</text><text x="690" y="917.500">29 Oct 17:00</text><text x="786" y="917.500">30 Oct 09:00</text><text x="882" y="917.500">30 Oct 17:00</text><text x="978" y="917.500">31 Oct 09:00</text></g>
</svg>

<div class="clip">
<div class="b l" style="left:15.500px"><span>EURUSD-5</span></div>
<div class="b l" style="left:68.500px"><span>GBPUSD-5</span></div>
<div class="b l" style="left:121.500px"><span>AUDUSD-5</span></div>
<div class="b l" style="left:174.500px"><span>USDCAD-5</span></div>
<div class="b l" style="left:227.500px"><span>USDCHF-5</span></div>
<div class="b l" style="left:280.500px"><span>USDJPY-5</span></div>
<div class="b l" style="left:333.500px"><span>EURJPY-5</span></div>
<div class="b l" style="left:386.500px"><span>AUDJPY-5</span></div>
<div class="b l" style="left:439.500px"><span>GBPJPY-5</span></div>
<div class="b l" style="left:492.500px"><span>EURAUD-5</span></div>
<div class="b l" style="left:545.500px"><span>EURCAD-5</span></div>
<div class="b l" style="left:598.500px"><span>GBPAUD-5</span></div>
<div class="b l" style="left:651.500px"><span>GBPCAD-5</span></div>
<div class="b d" style="left:704.500px"><span>EURUSD</span></div>
<div class="b" style="left:757.500px"><span>GBPUSD</span></div>
<div class="b" style="left:810.500px"><span>AUDUSD</span></div>
<div class="b" style="left:863.500px"><span>USDCAD</span></div>
<div class="b" style="left:916.500px"><span>USDCHF</span></div>
<div class="b" style="left:969.500px"><span>USDJPY</span></div>
<div class="b" style="left:1022.500px"><span>EURJPY</span></div>
<div class="b" style="left:1075.500px"><span>AUDJPY</span></div>
<div class="b" style="left:1128.500px"><span>GBPJPY</span></div>
<div class="b" style="left:1181.500px"><span>EURAUD</span></div>
<div class="b" style="left:1234.500px"><span>EURCAD</span></div>
<div class="b" style="left:1287.500px"><span>GBPAUD</span></div>
<div class="b" style="left:1340.500px"><span>GBPCAD</span></div>
<div class="b" style="left:1393.500px"><span>GBPCAD</span></div>
<div class="b" style="left:1446.500px"><span>GBPCAD</span></div>
<div class="b" style="left:1499.500px"><span>GBPCAD</span></div>
<div class="b" style="left:1552.500px"><span>CHFHKD</span></div>
<div class="b l" style="left:1605.500px"><span>USDTRY-5</span></div>
<div class="b l" style="left:1658.500px"><span>TRYJPY-5</span></div>
<div class="b l" style="left:1711.500px"><span>TRYJPY-5</span></div>
<div class="b l" style="left:1764.500px"><span>TRYJPY-5</span></div>
<div class="b l" style="left:1817.500px"><span>TRYJPY-5</span></div>
</div>
</body></html>
